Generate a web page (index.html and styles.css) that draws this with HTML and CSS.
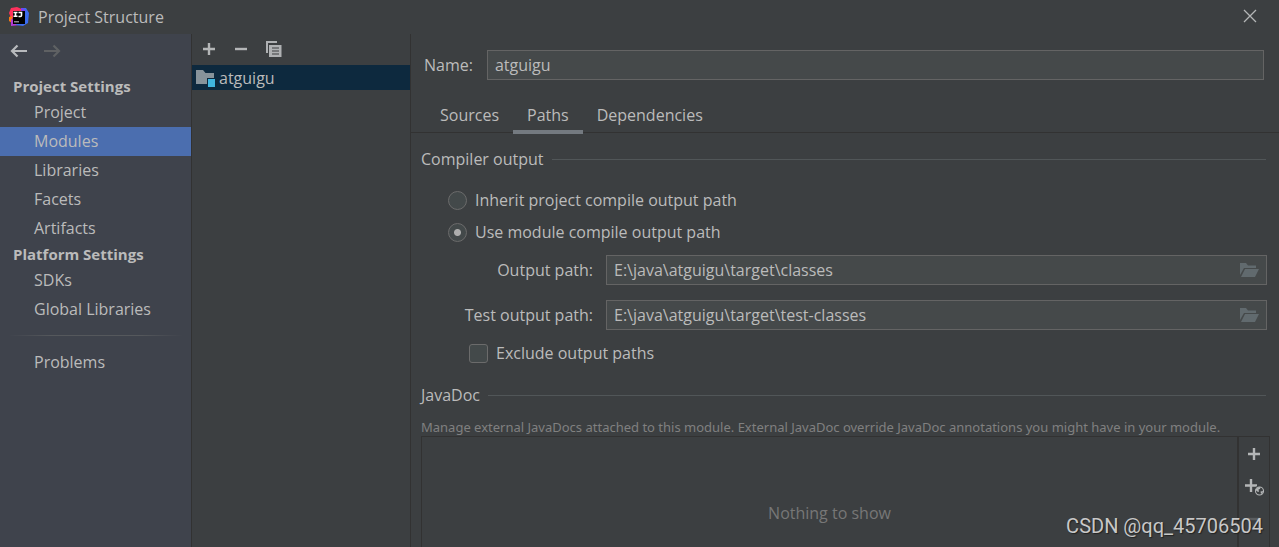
FILE: index.html
```html
<!DOCTYPE html>
<html lang="en">
<head>
<meta charset="utf-8">
<title>Project Structure</title>
<link rel="stylesheet" href="styles.css">
</head>
<body>
<div class="window">
  <header class="titlebar">
    <svg class="logo" width="22" height="20" viewBox="0 0 22 20">
      <path fill="#fe315d" d="M3 1l6-1 7 3-4 12-9-4-2-5z"/>
      <path fill="#f97a12" d="M1 10l3-1v7l-3-2z"/>
      <path fill="#b33bd2" d="M3 12l9 2v4l-9 1z"/>
      <path fill="#3b6cf0" d="M14 1l4 0 3 5-1 10-5 3-7-1z"/>
      <path fill="#7b3ff0" d="M13 1l2 0 3 3h-5z"/>
      <path fill="#000" d="M5 4h12v13H5z"/>
      <path fill="none" stroke="#fff" stroke-width="1.600" d="M5.500 5.500h4M7.500 5.500v4M5.500 9.300h4M10.500 5.500h3v3q0 1-1.200 1h-1.800"/>
      <path fill="#888" d="M6 14h5v1.500H6z"/>
    </svg>
    <h1 class="title">Project Structure</h1>
    <button class="icon-button close" aria-label="Close">
      <svg width="14" height="14" viewBox="0 0 14 14"><path fill="none" stroke="#b4b6b7" stroke-width="1.300" d="M1 1l12 12M13 1L1 13"/></svg>
    </button>
  </header>
  <div class="columns">
    <nav class="sidebar">
      <div class="history">
        <button class="icon-button" aria-label="Back">
          <svg width="18" height="14" viewBox="0 0 18 14"><path fill="none" stroke="#b8babd" stroke-width="2.200" d="M17 7H2M7.500 1.500L2 7l5.500 5.500"/></svg>
        </button>
        <button class="icon-button" aria-label="Forward" disabled>
          <svg width="18" height="14" viewBox="0 0 18 14"><path fill="none" stroke="#5f6163" stroke-width="2.200" d="M1 7h15M10.500 1.500L16 7l-5.500 5.500"/></svg>
        </button>
      </div>
      <h2 class="group">Project Settings</h2>
      <a class="item" href="#project">Project</a>
      <a class="item selected" href="#modules">Modules</a>
      <a class="item" href="#libraries">Libraries</a>
      <a class="item" href="#facets">Facets</a>
      <a class="item" href="#artifacts">Artifacts</a>
      <h2 class="group">Platform Settings</h2>
      <a class="item" href="#sdks">SDKs</a>
      <a class="item" href="#global-libraries">Global Libraries</a>
      <hr class="divider">
      <a class="item" href="#problems">Problems</a>
    </nav>
    <section class="modules">
      <div class="toolbar">
        <button class="icon-button" aria-label="Add">
          <svg width="16" height="16" viewBox="0 0 16 16"><path fill="none" stroke="#b4b6b7" stroke-width="2.400" d="M8 2v12M2 8h12"/></svg>
        </button>
        <button class="icon-button" aria-label="Remove">
          <svg width="16" height="16" viewBox="0 0 16 16"><path fill="none" stroke="#b4b6b7" stroke-width="2.400" d="M2 8h12"/></svg>
        </button>
        <button class="icon-button" aria-label="Copy">
          <svg width="18" height="18" viewBox="0 0 18 18"><path fill="#afb1b3" d="M1 1h11v2H3v10H1zM4 5h12.500v12H4z"/><path fill="none" stroke="#3c3f41" stroke-width="1.200" d="M7 8h7M7 11h7M7 14h7"/></svg>
        </button>
      </div>
      <a class="module" href="#atguigu">
        <svg width="20" height="18" viewBox="0 0 20 18"><path fill="#87939a" d="M0 1h7l2.500 3H18v5h-7v6H0z"/><path fill="#40b6e0" d="M12 10h7v8h-7z"/></svg>
        atguigu
      </a>
    </section>
    <main class="editor">
      <div class="name-row">
        <label for="name">Name:</label>
        <input class="field" id="name" type="text" value="atguigu">
      </div>
      <div class="tabs" role="tablist">
        <button class="tab" role="tab">Sources</button>
        <button class="tab active" role="tab" aria-selected="true">Paths</button>
        <button class="tab" role="tab">Dependencies</button>
      </div>
      <h3 class="section">Compiler output</h3>
      <div class="radios">
        <label class="choice"><input class="radio" type="radio" name="output">Inherit project compile output path</label>
        <label class="choice"><input class="radio" type="radio" name="output" checked>Use module compile output path</label>
      </div>
      <div class="paths">
        <label for="output-path">Output path:</label>
        <div class="field path">
          <input id="output-path" type="text" value="E:\java\atguigu\target\classes">
          <button class="icon-button" aria-label="Browse output path">
            <svg width="20" height="14" viewBox="0 0 20 14"><path fill="#616a6e" d="M1 0h6l2 2.500h8V5H5L1 12zM6 6h14l-4 8H2z"/></svg>
          </button>
        </div>
        <label for="test-path">Test output path:</label>
        <div class="field path">
          <input id="test-path" type="text" value="E:\java\atguigu\target\test-classes">
          <button class="icon-button" aria-label="Browse test output path">
            <svg width="20" height="14" viewBox="0 0 20 14"><path fill="#616a6e" d="M1 0h6l2 2.500h8V5H5L1 12zM6 6h14l-4 8H2z"/></svg>
          </button>
        </div>
      </div>
      <label class="choice exclude"><input class="check" type="checkbox">Exclude output paths</label>
      <h3 class="section javadoc">JavaDoc</h3>
      <p class="hint">Manage external JavaDocs attached to this module. External JavaDoc override JavaDoc annotations you might have in your module.</p>
      <div class="docs">
        <div class="empty">Nothing to show</div>
        <div class="docs-tools">
          <button class="icon-button" aria-label="Add JavaDoc">
            <svg width="20" height="16" viewBox="0 0 20 16"><path fill="none" stroke="#b4b6b7" stroke-width="2.400" d="M10 2v12M4 8h12"/></svg>
          </button>
          <button class="icon-button" aria-label="Add JavaDoc URL">
            <svg width="20" height="18" viewBox="0 0 20 18"><path fill="none" stroke="#b4b6b7" stroke-width="2.400" d="M7 1v13M1 7.500h12"/><circle cx="15.500" cy="13" r="5.500" fill="#3c3f41"/><circle cx="15.500" cy="13" r="4" fill="none" stroke="#b4b6b7" stroke-width="1.100"/><path fill="#b4b6b7" d="M12 11l3-2 1.500.5-.5 1.500-1.500.5.500 2-1 .5-2.500-2zM16.500 13.500l2.500-.5-.5 2-1.500 1z"/></svg>
          </button>
          <button class="icon-button" aria-label="Remove JavaDoc" disabled>
            <svg width="20" height="16" viewBox="0 0 20 16"><path fill="none" stroke="#5a5d5f" stroke-width="2.400" d="M4 7h12"/></svg>
          </button>
        </div>
      </div>
    </main>
  </div>
  <div class="watermark">CSDN @qq_45706504</div>
</div>
</body>
</html>
```
FILE: styles.css
```css
* { box-sizing: border-box; }

body {
  margin: 0;
  background: #3c3f41;
  color: #bbbbbb;
  font: 16px/24px "Open Sans", "Noto Sans", sans-serif;
}

h1, h2, h3, p { margin: 0; font-size: inherit; font-weight: 400; }
a { color: inherit; text-decoration: none; }
input, button { font: inherit; color: inherit; }
svg { display: block; flex: none; }

.icon-button {
  display: flex;
  align-items: center;
  justify-content: center;
  padding: 0;
  border: 0;
  background: none;
}

.window {
  position: relative;
  display: flex;
  flex-direction: column;
  height: 100vh;
  overflow: hidden;
}

.titlebar {
  display: flex;
  align-items: center;
  gap: 8px;
  height: 34px;
  padding: 0 22px 0 8px;
}
.title { flex: 1; }
.close { padding: 0 0 2px; }

.columns { display: flex; flex: 1; min-height: 0; }

.sidebar {
  flex: 0 0 192px;
  background: #3f434c;
  border-right: 1px solid #323232;
}
.history {
  display: flex;
  gap: 15px;
  padding: 10px 10px 17px;
}
.group {
  padding-left: 13px;
  font-size: 15px;
  font-weight: 700;
  line-height: 23px;
}
.item {
  display: block;
  padding-left: 34px;
  line-height: 29px;
}
.selected { background: #4b6eaf; }
.divider {
  height: 1px;
  margin: 11px 8px 12px;
  border: 0;
  background: linear-gradient(90deg, transparent, #55585c 25%, #55585c 75%, transparent);
}

.modules {
  flex: 0 0 219px;
  border-right: 1px solid #323232;
}
.toolbar {
  display: flex;
  align-items: center;
  gap: 16px;
  height: 31px;
  padding: 0 9px 2px;
}
.module {
  display: flex;
  align-items: center;
  gap: 3px;
  height: 25px;
  padding-left: 4px;
  background: #0d293e;
}

.editor {
  display: flex;
  flex: 1;
  flex-direction: column;
  min-width: 0;
}

.name-row {
  display: flex;
  align-items: center;
  gap: 14px;
  padding: 16px 15px 0 13px;
}
.field {
  flex: 1;
  min-width: 0;
  height: 30px;
  padding: 0 7px;
  border: 1px solid #646464;
  background: #45494a;
}

.tabs {
  display: flex;
  height: 53px;
  padding: 16px 15px 0;
  border-bottom: 1px solid #323232;
}
.tab {
  height: 38px;
  padding: 4px 14px 0;
  border: 0;
  border-bottom: 4px solid transparent;
  background: none;
}
.active { border-bottom-color: #747a80; }

.section {
  display: flex;
  align-items: center;
  gap: 8px;
  padding: 14px 13px 0 10px;
}
.section::after {
  content: "";
  flex: 1;
  height: 1px;
  background: #515658;
}

.radios {
  display: grid;
  gap: 8px;
  padding: 17px 0 0 37px;
}
.choice { display: flex; align-items: center; gap: 8px; }
.radio, .check {
  appearance: none;
  flex: none;
  width: 19px;
  height: 19px;
  margin: 0;
  border: 1px solid #6b6b6b;
  background: #43494a;
}
.radio { border-radius: 50%; }
.radio:checked { background: radial-gradient(circle, #adadad 3px, #43494a 4px); }
.check { border-radius: 3px; }

.paths {
  display: grid;
  grid-template-columns: 182px 1fr;
  column-gap: 13px;
  row-gap: 15px;
  align-items: center;
  padding: 11px 12px 0 0;
}
.paths label { text-align: right; }
.path {
  display: flex;
  align-items: center;
  padding-right: 7px;
}
.path input {
  flex: 1;
  min-width: 0;
  padding: 0;
  border: 0;
  background: none;
}
.exclude { padding: 11px 0 0 58px; }
.javadoc { padding-top: 18px; }

.hint {
  padding: 11px 10px 0;
  color: #808080;
  font-family: "Noto Sans", sans-serif;
  font-size: 13px;
  line-height: 18px;
  white-space: nowrap;
}
.docs {
  display: flex;
  flex: 1;
  margin: 0 9px 0 10px;
  border: 1px solid #323232;
  border-bottom: 0;
}
.empty {
  flex: 1;
  padding-top: 64px;
  color: #777777;
  text-align: center;
}
.docs-tools {
  display: flex;
  flex: 0 0 32px;
  flex-direction: column;
  align-items: center;
  gap: 16px;
  padding-top: 9px;
  border-left: 2px solid #323232;
}

.watermark {
  position: absolute;
  right: 16px;
  bottom: 9px;
  color: #c8c8c8;
  font-family: Roboto, sans-serif;
  font-size: 20px;
  text-shadow: 1px 1px 1px #222222;
}
```
